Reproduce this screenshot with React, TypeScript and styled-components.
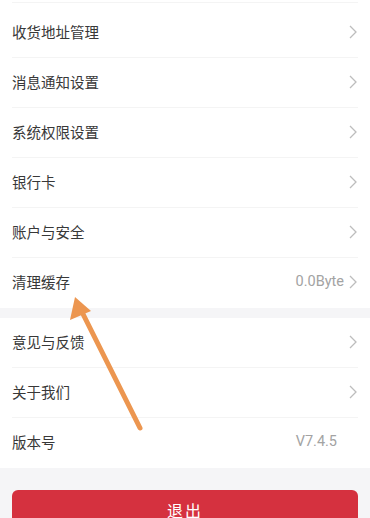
import React from 'react';
import styled, { createGlobalStyle } from 'styled-components';

const GlobalStyle = createGlobalStyle`
  html, body {
    margin: 0;
    padding: 0;
    background: #f5f5f7;
    font-family: "Noto Sans CJK SC", "Noto Sans", sans-serif;
  }
`;

const Page = styled.div`
  position: relative;
  width: 370px;
  height: 518px;
  overflow: hidden;
  background: #f5f5f7;
`;

const Group = styled.div<{ $top?: number }>`
  background: #fff;
  padding-top: ${(p) => p.$top ?? 0}px;
  margin-bottom: 10px;
`;

const TopLine = styled.div`
  height: 6px;
  box-sizing: border-box;
  margin: 0 12px;
  border-top: 1px solid #f4f4f4;
`;

const Row = styled.div<{ $last?: boolean }>`
  height: 50px;
  display: flex;
  align-items: center;
  padding: 0 13px 3px 12px;
  box-sizing: border-box;
  position: relative;
  &::after {
    content: '';
    display: ${(p) => (p.$last ? 'none' : 'block')};
    position: absolute;
    left: 12px;
    right: 12px;
    bottom: 0;
    height: 1px;
    background: #f4f4f4;
  }
`;

const Label = styled.span`
  flex: 1;
  font-size: 14.5px;
  color: #383838;
`;

const Value = styled.span<{ $pad?: boolean }>`
  font-family: Roboto, "Noto Sans", sans-serif;
  font-size: 14.5px;
  color: #a3a3a3;
  margin-right: ${(p) => (p.$pad ? '20px' : '5px')};
`;

const Footer = styled.div`
  padding: 12px 12px 0;
`;

const LogoutButton = styled.button`
  width: 100%;
  height: 46px;
  border: none;
  border-radius: 6px;
  background: #d5313f;
  color: #fff;
  font-family: "Noto Sans CJK SC", sans-serif;
  font-size: 16px;
  letter-spacing: 2px;
  padding: 0 0 6px;
`;

const Overlay = styled.svg`
  position: absolute;
  left: 0;
  top: 0;
  pointer-events: none;
`;

const Chevron = () => (
  <svg width="8" height="14" viewBox="0 0 8 14">
    <path d="M1 1l6 6-6 6" fill="none" stroke="#bdbdbd" strokeWidth="1.3" />
  </svg>
);

interface Item {
  label: string;
  value?: string;
  arrow: boolean;
}

const first: Item[] = [
  { label: '收货地址管理', arrow: true },
  { label: '消息通知设置', arrow: true },
  { label: '系统权限设置', arrow: true },
  { label: '银行卡', arrow: true },
  { label: '账户与安全', arrow: true },
  { label: '清理缓存', value: '0.0Byte', arrow: true },
];

const second: Item[] = [
  { label: '意见与反馈', arrow: true },
  { label: '关于我们', arrow: true },
  { label: '版本号', value: 'V7.4.5', arrow: false },
];

const renderRows = (items: Item[]) =>
  items.map((item, i) => (
    <Row key={item.label} $last={i === items.length - 1}>
      <Label>{item.label}</Label>
      {item.value && <Value $pad={!item.arrow}>{item.value}</Value>}
      {item.arrow && <Chevron />}
    </Row>
  ));

const App: React.FC = () => (
  <>
    <GlobalStyle />
    <Page>
      <Group $top={2}>
        <TopLine />
        {renderRows(first)}
      </Group>
      <Group>{renderRows(second)}</Group>
      <Footer>
        <LogoutButton>退出</LogoutButton>
      </Footer>
      <Overlay width="370" height="518">
        <line x1="140" y1="428" x2="82" y2="312" stroke="#ec9650" strokeWidth="5" strokeLinecap="round" />
        <polygon points="75,297 70,320 91,311" fill="#ec9650" />
      </Overlay>
    </Page>
  </>
);

export default App;
